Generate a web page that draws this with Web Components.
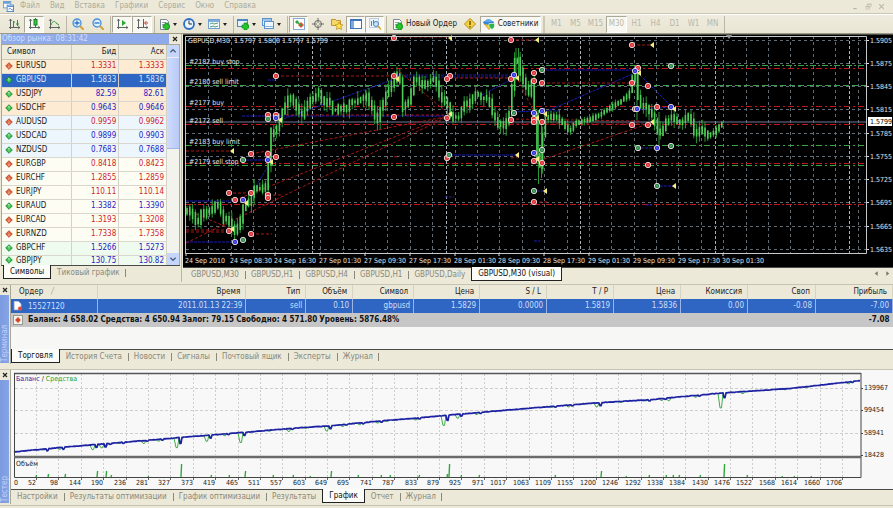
<!DOCTYPE html>
<html lang="ru">
<head>
<meta charset="utf-8">
<title>GBPUSD,M30 (visual)</title>
<style>
html{background:#ece9d8}
body{margin:0;font:8px/10px "DejaVu Sans Condensed","DejaVu Sans",sans-serif;color:#222;background:#ece9d8}
</style>
</head>
<body>
<trade-app></trade-app>
<script>
const RESET = `*{box-sizing:border-box}
button{font:inherit;color:inherit;background:none;border:0;padding:0;margin:0;white-space:nowrap;cursor:default}
svg{display:block}`;

function define(name, css, render) {
  customElements.define(name, class extends HTMLElement {
    connectedCallback() {
      if (this.shadowRoot) return;
      const root = this.attachShadow({ mode: 'open' });
      root.innerHTML = `<style>${RESET}${css}</style>` + render(this);
    }
  });
}

/* ---------- icons ---------- */
const page = '<path d="M2.5 1.5h6l2 2v8h-8z" fill="#fff" stroke="#7c8794"/><path d="M4 4.5h4M4 6.5h5" stroke="#9aa4b0"/>';
const plus = (x, y) => `<path d="M${x + 2} ${y}h3v2h2v3h-2v2h-3v-2h-2v-3h2z" fill="#25c52b" stroke="#118a1d" stroke-width=".7"/>`;
const axes = '<path d="M2.500 1v10M1 9.500h11" stroke="#5b6660" fill="none"/><path d="M1 3l1.500-2L4 3M10 8l2 1.500L10 11" fill="none" stroke="#5b6660" stroke-width=".7"/>';
const ICONS = {
  app: '<rect x=".5" y=".5" width="8" height="7" fill="#fff" stroke="#6f9bd3"/><path d="M1 2h7" stroke="#6f9bd3" stroke-width="2"/><rect x="4.500" y="4.500" width="7" height="7" fill="#fff" stroke="#4a86d0"/><path d="M5 6h7M6 9l2-1 2 2 2-2" stroke="#4a86d0" fill="none"/>',
  bars: axes + '<path d="M5.500 3v6M5 4h2M9.500 2v6M8 6h3" stroke="#28913a" fill="none"/>',
  candles: axes + '<path d="M7.500 0v9" stroke="#14841f"/><rect x="6" y="1.500" width="3" height="5.500" fill="#2fca3c" stroke="#14841f"/>',
  line: axes + '<path d="M3 7C5 2 7 3 8 5l3 2" stroke="#28a03a" fill="none"/>',
  zoomin: '<path d="M8 8l4 4" stroke="#d6a53a" stroke-width="2.200"/><circle cx="5" cy="5" r="4" fill="#dff0fd" stroke="#4b8fd6" stroke-width="1.300"/><path d="M2.500 5h5M5 2.500v5" stroke="#2c73c4" stroke-width="1.300"/>',
  zoomout: '<path d="M8 8l4 4" stroke="#d6a53a" stroke-width="2.200"/><circle cx="5" cy="5" r="4" fill="#dff0fd" stroke="#4b8fd6" stroke-width="1.300"/><path d="M2.500 5h5" stroke="#2c73c4" stroke-width="1.300"/>',
  scroll: axes + '<path d="M6 2l4 3-4 3z" fill="#27a738"/>',
  shift: axes + '<path d="M7.500 1v8" stroke="#566"/><path d="M12 5H9M10.500 3L8.500 5l2 2" stroke="#c0432c" fill="none"/>',
  newchart: page + plus(5, 5),
  clock: '<circle cx="6" cy="6" r="5" fill="#eaf5ff" stroke="#2d6fc4" stroke-width="1.800"/><path d="M6 2.500V6h3" stroke="#234" fill="none"/>',
  template: '<rect x=".5" y="1.500" width="11" height="9" fill="#f4faff" stroke="#6d9fd4"/><path d="M1 3h10" stroke="#5b93d0" stroke-width="1.500"/><path d="M2 6l2-1 2 1 4-1M2 9l3-1 2 1 3-1" fill="none" stroke="#5a9a78"/>',
  addwin: '<rect x=".5" y="1.500" width="10" height="7" fill="#e6f1fc" stroke="#4c88c9"/><path d="M1 2.500h9" stroke="#4c88c9"/>' + plus(5, 5),
  windows: '<rect x=".5" y=".5" width="9" height="7" fill="#e6f1fc" stroke="#5b93d0"/><path d="M1 2h8" stroke="#5b93d0"/><rect x="2.500" y="3.500" width="9" height="7" fill="#eef6fd" stroke="#5b93d0"/><path d="M3 8.500h8" stroke="#8db6e2"/>',
  watch: '<rect x=".5" y=".5" width="11" height="11" fill="#fff" stroke="#86a9d0"/><path d="M2 4l2-2 2 2-2 2z" fill="#2aa83a"/><path d="M5 7l3-3 3 3-3 3z" fill="#df5538"/><path d="M4 4l5 4" stroke="#2aa83a" stroke-width="1.500"/>',
  cross: '<circle cx="6" cy="6" r="3.500" fill="none" stroke="#6c6c66"/><path d="M6 0v5M6 7v5M0 6h5M7 6h5" stroke="#6c6c66"/>',
  folderstar: '<path d="M.5 1.500h4l1 1h4v5h-9z" fill="#f7d768" stroke="#bd9530"/><path d="M8 4l1.300 2.500 2.700.4-2 1.900.5 2.700L8 10.200 5.500 11.500 6 8.800 4 6.900l2.700-.4z" fill="#ffe24a" stroke="#b98a1c" stroke-width=".7"/>',
  panel: '<rect x=".5" y="1.500" width="11" height="9" fill="#fff" stroke="#3f74b8"/><path d="M1 2.500h10" stroke="#3f74b8"/><rect x="1" y="3" width="3" height="7" fill="#7ea9dc"/>',
  tester: '<rect x=".5" y=".5" width="9" height="9" fill="#eaf4fd" stroke="#86a9d0" stroke-dasharray="1 1"/><path d="M2.500 3v5M4.500 2v4" stroke="#4a84c2"/><circle cx="7" cy="6" r="2.500" fill="#cfe6fa" stroke="#4a84c2"/><path d="M9 8l3 3.500" stroke="#d6a53a" stroke-width="1.600"/>',
  warn: '<path d="M6 .5L11.500 6 6 11.500.5 6z" fill="#f8d23c" stroke="#b38a18"/><path d="M6 3v4M6 8v1.500" stroke="#54420c" stroke-width="1.300"/>',
  expert: '<path d="M1 6l5 5.500L11 6 6 4z" fill="#f1c63c" stroke="#bb8f1b" stroke-width=".6"/><ellipse cx="5.500" cy="4.500" rx="5.500" ry="2.200" fill="#3786d6"/><path d="M2 4C2 0 9 0 9 4z" fill="#5ba8ee"/><path d="M6 5.500h5.500V9L9 11.500 6 9z" fill="#2bb44a" stroke="#fff" stroke-width=".6"/>',
  order: '<path d="M1.500.5h5l3 3v7h-8z" fill="#fff" stroke="#c8d2de"/><circle cx="8.500" cy="9" r="2.500" fill="#e0492f"/>',
  balance: '<rect x=".5" y=".5" width="11" height="11" fill="#f3f3ee" stroke="#8b8b84"/><path d="M6 2.500L9.500 6 6 9.500 2.500 6z" fill="#d4472c"/>',
  up: '<path d="M6 1l5 5-5 5-5-5z" fill="#23b53c" stroke="#128028"/><path d="M6 3.500v5M4 5.500l2-2 2 2" stroke="#d8ffd8" fill="none"/>',
  down: '<path d="M6 1l5 5-5 5-5-5z" fill="#d9552f" stroke="#ab3c1e"/><path d="M6 3.500v5M4 6.500l2 2 2-2" stroke="#ffc8a8" fill="none"/>',
  close: '<path d="M3 3l6 6M9 3L3 9" stroke="#222" stroke-width="1.800"/>',
  min: '<path d="M2 9.500h6" stroke="#b9b7a8" stroke-width="2"/>',
  restore: '<path d="M4.500 1.500h6v5h-6zM4 2.500h7M1.500 5.500h6v5h-6zM1 6.500h7" fill="none" stroke="#b9b7a8"/>',
  winclose: '<path d="M2 2l8 8M10 2l-8 8" stroke="#b9b7a8" stroke-width="1.800"/>',
  chevup: '<path d="M2 8l4-4 4 4" fill="none" stroke="#4a6385" stroke-width="2"/>',
  chevdown: '<path d="M2 4l4 4 4-4" fill="none" stroke="#4a6385" stroke-width="2"/>',
  left: '<path d="M8 2L3 6l5 4z" fill="#77756a"/>',
  right: '<path d="M4 2l5 4-5 4z" fill="#77756a"/>'
};
define('mt-icon', ':host{display:inline-block;width:var(--s,12px);height:var(--s,12px);flex:none}svg{width:100%;height:100%}',
  el => `<svg viewBox="0 0 12 12" fill="none" aria-hidden="true">${ICONS[el.getAttribute('name')]}</svg>`);

/* ---------- menu bar ---------- */
define('menu-bar', `:host{display:flex;align-items:center;height:14px;padding:0 8px 1px 3px;color:#aeac9d;border-bottom:1px solid #c9c6b4}
nav{display:flex;gap:10px;margin-left:6px;flex:1}.w{display:flex;gap:6px}.w mt-icon{--s:7px}.w button{line-height:0}`,
  () => `<mt-icon name="app" style="--s:11px"></mt-icon><nav>${['Файл', 'Вид', 'Вставка', 'Графики', 'Сервис', 'Окно', 'Справка'].map(t => `<button>${t}</button>`).join('')}</nav>
<div class="w">${[['min', 'Свернуть'], ['restore', 'Восстановить'], ['winclose', 'Закрыть']].map(([i, l]) => `<button aria-label="${l}"><mt-icon name="${i}"></mt-icon></button>`).join('')}</div>`);

/* ---------- toolbar ---------- */
define('tool-button', `:host{display:block;flex:none;width:var(--w,20px)}
button{display:flex;align-items:center;justify-content:center;gap:3px;width:100%;height:17px;border:1px solid transparent}
:host([drop]) button{justify-content:flex-start;padding-left:1px}
:host([pressed]) button{background:#f8f7f1;border-color:#aaa899 #fff #fff #aaa899}
:host([frame]){color:#b9b7a8}
i{border:2px solid transparent;border-top:3px solid #222;border-bottom:0;flex:none}`,
  el => `<button${el.title ? ` aria-label="${el.title}"` : ''}>${el.getAttribute('icon') ? `<mt-icon name="${el.getAttribute('icon')}"></mt-icon>` : ''}<slot></slot>${el.hasAttribute('drop') ? '<i></i>' : ''}</button>`);
define('tool-bar', `:host{display:flex;align-items:center;height:20px;padding-left:4px;border-top:1px solid #fff;border-bottom:1px solid #9c9a8a;overflow:hidden;background:linear-gradient(#efecdf,#e8e5d3)}
hr{width:1px;height:17px;margin:0 1px 0 2px;border:0;background:#bab7a4;flex:none}hr.g{width:2px;margin:0 2px;background:#cbc8b6}
.n{--w:19px}.d{--w:25px}.t{--w:21px}.o{--w:72px}.e{--w:61px}`,
  () => `<tool-button icon="bars" title="Бары"></tool-button><tool-button icon="candles" title="Свечи" pressed></tool-button><tool-button icon="line" title="Линия"></tool-button><hr>
<tool-button icon="zoomin" title="Увеличить"></tool-button><tool-button icon="zoomout" title="Уменьшить"></tool-button><hr>
<tool-button icon="scroll" title="Автопрокрутка" pressed></tool-button><tool-button icon="shift" title="Сдвиг графика" pressed></tool-button><hr>
<tool-button class="d" icon="newchart" title="Индикаторы" drop></tool-button><tool-button class="d" icon="clock" title="Периоды" drop></tool-button><tool-button class="d" icon="template" title="Шаблоны" drop></tool-button><hr>
<tool-button class="d" icon="addwin" title="Новый график" drop></tool-button><tool-button class="d" icon="windows" title="Профили" drop></tool-button><hr>
<tool-button class="n" icon="watch" title="Обзор рынка" pressed></tool-button><tool-button class="n" icon="cross" title="Окно данных"></tool-button><tool-button class="n" icon="folderstar" title="Навигатор"></tool-button><tool-button class="n" icon="panel" title="Терминал" pressed></tool-button><tool-button class="n" icon="tester" title="Тестер" pressed></tool-button><hr>
<tool-button class="o" icon="newchart">Новый Ордер</tool-button><tool-button icon="warn" title="MetaEditor"></tool-button><tool-button class="e" icon="expert" pressed>Советники</tool-button><hr class="g">
${['M1', 'M5', 'M15', 'M30', 'H1', 'H4', 'D1', 'W1', 'MN'].map(t => `<tool-button frame class="${t.length > 2 ? 't' : 'n'}"${t === 'M30' ? ' pressed' : ''}>${t}</tool-button>`).join('')}<hr>`);

/* ---------- tab strip ---------- */
define('tab-strip', `:host{display:flex;flex:none;height:15px;border-top:1px solid #4a4a46;color:#8a887b;background:#ece9d8;padding-left:var(--pad,0)}
button{height:13px;padding:0 6px;position:relative}
button+button:not(.on):not(.after)::before,button.last::after{content:"";position:absolute;left:0;top:3px;height:8px;border-left:1px solid #8a887b}
button.last::after{left:auto;right:0}
button.on{background:#fcfcf8;color:#111;border:1px solid #222;border-top:0;margin-top:-1px;padding-top:1px;height:14px}
span{flex:1}.nav{padding:0 2px}.nav mt-icon{--s:7px}`,
  el => {
    const tabs = el.getAttribute('tabs').split(';'), on = +el.getAttribute('active');
    return tabs.map((t, i) => `<button role="tab" aria-selected="${i === on}" class="${i === on ? 'on' : ''} ${i === on + 1 ? 'after' : ''} ${i === tabs.length - 1 && i !== on ? 'last' : ''}">${t}</button>`).join('') +
      (el.hasAttribute('arrows') ? '<span></span><button class="nav after" aria-label="Назад"><mt-icon name="left"></mt-icon></button><button class="nav after" aria-label="Вперёд"><mt-icon name="right"></mt-icon></button>' : '');
  });

/* ---------- market watch ---------- */
const QUOTES = [['EURUSD', '1.3331', '1.3333', 0, 'a'], ['GBPUSD', '1.5833', '1.5836', 1, 'sel'], ['USDJPY', '82.59', '82.61', 1, 'a'], ['USDCHF', '0.9643', '0.9646', 1, 'a'], ['AUDUSD', '0.9959', '0.9962', 0, 'b'], ['USDCAD', '0.9899', '0.9903', 1, 'b'], ['NZDUSD', '0.7683', '0.7688', 1, 'b'], ['EURGBP', '0.8418', '0.8423', 0, 'c'], ['EURCHF', '1.2855', '1.2859', 0, 'c'], ['EURJPY', '110.11', '110.14', 0, 'c'], ['EURAUD', '1.3382', '1.3390', 1, 'c'], ['EURCAD', '1.3193', '1.3208', 0, 'c'], ['EURNZD', '1.7338', '1.7358', 0, 'c'], ['GBPCHF', '1.5266', '1.5273', 1, 'd'], ['GBPJPY', '130.75', '130.82', 1, 'd']];
define('market-watch', `:host{display:flex;flex-direction:column;padding:0 1px 2px;border-right:1px solid #bab7a6}
header{display:flex;height:10px;line-height:10px;background:#8eaaea;color:#d3dff9}header b{flex:1;font-weight:400;padding-left:1px}
header button{width:11px;background:#ece9d8;display:grid;place-items:center}header mt-icon{--s:8px}
.body{display:flex;flex:1 1 0;min-height:0;overflow:hidden;border:1px solid #aaa797;border-bottom:0;background:#fff}
.list{flex:1;overflow:hidden}
table{width:100%;border-collapse:collapse;table-layout:fixed}
th,td{height:14px;padding:0 2px 0 3px;font-weight:400;text-align:right;border-right:1px solid #d3d1c8;border-bottom:1px solid #d9d7ce}
th{background:#efecde;border-color:#cbc8b8}th:first-child,td:first-child{text-align:left}th:first-child{width:42%;padding-left:5px}
td mt-icon{--s:8px;vertical-align:middle;margin-right:3px}
tr:last-child td{vertical-align:top;line-height:9px}
.a{background:#fdebd3}.b{background:#edf6fd}.c{background:#fefdf3}.d{background:#effbef}.up td+td{color:#2722c4}.dn td+td{color:#d0232a}
tr.sel td{background:#2f66c4;color:#d9e5fb}
.sb{width:12px;background:#f3f3ee;display:flex;flex-direction:column}.sb button{height:12px;background:#c6d5fb;display:grid;place-items:center}.sb mt-icon{--s:8px}
.sb i{height:92px;background:linear-gradient(90deg,#cfdcfd,#b7caf6);border-top:1px solid #eef;border-bottom:1px solid #a2b6e4}.sb s{flex:1}`,
  () => `<header><b>Обзор рынка: 08:31:42</b><button aria-label="Закрыть"><mt-icon name="close"></mt-icon></button></header>
<div class="body"><div class="list"><table><thead><tr><th>Символ</th><th>Бид</th><th>Аск</th></tr></thead><tbody>
${QUOTES.map(([s, b, a, u, c]) => `<tr class="${c} ${u ? 'up' : 'dn'}"><td><mt-icon name="${u ? 'up' : 'down'}"></mt-icon>${s}</td><td>${b}</td><td>${a}</td></tr>`).join('')}
</tbody></table></div><div class="sb"><button aria-label="Вверх"><mt-icon name="chevup"></mt-icon></button><i></i><s></s><button aria-label="Вниз"><mt-icon name="chevdown"></mt-icon></button></div></div>
<tab-strip tabs="Символы;Тиковый график" active="0" style="--pad:2px"></tab-strip>`);

/* ---------- price chart ---------- */
function priceChart() {
  const o = [], ln = (x1, y1, x2, y2, c, d, w = 1) => o.push(`<line x1="${x1}" y1="${y1}" x2="${x2}" y2="${y2}" stroke="${c}"${d ? ` stroke-dasharray="${d}"` : ''} stroke-width="${w}"/>`);
  const L = 186, R = 866, grid = '#616c74';
  for (let i = 0; i < 30; i++) ln(Math.round(208.3 + i * 22.39) + .5, 36, Math.round(208.3 + i * 22.39) + .5, 253, grid, '3 3');
  for (const x of [312, 446, 580, 715, 849]) ln(x + .5, 36, x + .5, 253, '#a9b1b6', '3 2');
  const price = ['1.5905', '1.5875', '1.5845', '1.5815', '1.5785', '1.5755', '1.5725', '1.5695', '1.5665', '1.5635'];
  price.forEach((p, i) => { const y = Math.round(39.5 + i * 23.28); ln(L, y + .5, R, y + .5, grid, '3 3'); ln(R, y + .5, R + 3, y + .5, '#ddd'); o.push(`<text x="870" y="${y + 3}">${p}</text>`); });
  const G = '#38a343', D = '#c01818', B = '#1c1cae';
  for (const [y, c, d] of [[65, G, '6 2 2 2'], [68, D, '6 3 2 3'], [85, G, '6 3'], [106, D, '6 3 2 3'], [124, D, '6 3 2 3'], [145, G, '6 3 2 3'], [163, D, '6 3 2 3'], [165, G, '6 3 2 3'], [204, D, '6 2 2 2']]) ln(L, y + .5, R, y + .5, c, d);
  ln(L, 122, R, 122, '#6d7892');
  for (const s of [[186, 201, 234, 201], [186, 242, 235, 242], [242, 116, 445, 116], [246, 203, 270, 163], [280, 120, 392, 80], [397, 75, 514, 75], [397, 77, 514, 77], [450, 155, 517, 155], [478, 97, 514, 78], [542, 70, 637, 70], [545, 112, 637, 72], [545, 111, 560, 111], [640, 75, 671, 106], [635, 110, 671, 107], [637, 148, 657, 148], [656, 186, 674, 186], [242, 160, 268, 160], [533, 191, 545, 191], [514, 112, 534, 111], [445, 197, 454, 197], [534, 241, 540, 241], [268, 80, 276, 80], [276, 39, 281, 39], [646, 205, 652, 205]]) ln(...s, B, '3 1');
  for (const s of [[276, 76, 394, 76], [394, 37, 450, 37], [511, 40, 537, 40], [632, 45, 652, 45], [450, 78, 511, 78], [542, 83, 632, 83], [228, 193, 251, 193], [186, 151, 232, 151], [186, 230, 229, 230], [186, 232, 229, 232], [186, 210, 234, 230], [186, 243, 445, 118], [235, 200, 445, 117], [251, 154, 445, 117], [544, 159, 648, 124], [276, 115, 445, 115], [511, 119, 640, 121], [511, 124, 648, 124], [518, 80, 534, 112], [400, 72, 446, 112], [268, 195, 281, 195], [251, 234, 272, 234], [394, 157, 400, 156], [511, 158, 518, 157], [534, 202, 548, 202]]) ln(...s, '#a81616', '3 2');

  const P = [186, 209, 190, 211, 194, 216, 198, 226, 202, 214, 208, 213, 212, 211, 216, 205, 220, 206, 224, 220, 228, 218, 232, 226, 236, 232, 240, 226, 245, 206, 250, 203, 254, 190, 258, 189, 262, 188, 266, 192, 269, 175, 271, 130, 276, 133, 280, 122, 284, 110, 288, 100, 292, 99, 296, 105, 300, 112, 304, 115, 308, 105, 312, 100, 316, 98, 320, 92, 324, 103, 330, 102, 335, 112, 340, 107, 346, 110, 352, 102, 358, 102, 364, 98, 368, 97, 374, 110, 378, 122, 382, 108, 386, 98, 390, 88, 394, 84, 398, 75, 401, 80, 404, 108, 408, 105, 413, 90, 416, 78, 422, 86, 428, 83, 434, 79, 438, 85, 441, 99, 446, 101, 449, 107, 452, 118, 460, 117, 464, 104, 470, 104, 478, 93, 482, 98, 490, 100, 494, 115, 500, 125, 506, 125, 510, 118, 513, 90, 516, 62, 518, 56, 521, 70, 526, 85, 531, 95, 533, 82, 536, 120, 539, 165, 541, 168, 544, 135, 547, 118, 552, 115, 557, 117, 563, 122, 570, 132, 576, 123, 590, 120, 600, 115, 610, 108, 620, 102, 630, 95, 634, 78, 637, 76, 640, 104, 646, 107, 650, 110, 655, 118, 660, 137, 664, 128, 668, 120, 675, 118, 682, 124, 688, 115, 692, 120, 696, 134, 702, 128, 708, 136, 715, 133, 720, 126, 724, 122];
  const at = x => { let i = 2; while (i < P.length - 2 && P[i] < x) i += 2; const t = (x - P[i - 2]) / (P[i] - P[i - 2]); return P[i - 1] + (P[i + 1] - P[i - 1]) * Math.min(1, Math.max(0, t)); };
  /* A fixed seed keeps the candles the same on every load. */
  let seed = 7; const rnd = () => (seed = (seed * 16807) % 2147483647) / 2147483647;
  let wick = '', body = '';
  for (let x = 187; x <= 724; x += 2.8) {
    const calm = (x > 562 && x < 630) || x > 708 ? .35 : .9, a = at(x - 1.4), b = at(x + 1.4);
    const t = Math.min(a, b) - rnd() * 4 * calm - 1, u = Math.max(a, b) + rnd() * 4 * calm + 1;
    const up = rnd() * 8 * calm, dn = rnd() * 8 * calm;
    wick += `M${x.toFixed(1)} ${(t - up).toFixed(1)}V${(u + dn).toFixed(1)}`;
    body += `M${x.toFixed(1)} ${t.toFixed(1)}V${u.toFixed(1)}`;
  }
  wick += 'M516 48V80M518.500 48V75M538.500 110V184M541.500 120V178M637 68V120M659 112V147';
  o.push(`<path d="${wick}" stroke="#2a9a35" stroke-width="1"/><path d="${body}" stroke="#4fcb57" stroke-width="1.600"/>`);

  const dot = (pts, c) => pts.forEach(([x, y]) => o.push(`<circle cx="${x}" cy="${y}" r="2.700" fill="${c}" stroke="#f4e6e6" stroke-width=".9"/><path d="M${x - 1.5} ${y}h3M${x} ${y - 1.5}v3" stroke="#fff" stroke-opacity=".3" stroke-width=".8"/>`));
  dot([[276, 76], [394, 76], [394, 38], [268, 115], [276, 115], [394, 117], [229, 193], [235, 200], [251, 193], [251, 154], [268, 154], [276, 157], [268, 195], [268, 198], [229, 231], [251, 234], [511, 40], [450, 76], [447, 79], [511, 79], [534, 73], [534, 81], [542, 83], [511, 120], [542, 122], [534, 119], [534, 122], [447, 118], [447, 158], [534, 161], [542, 163], [534, 202], [632, 45], [638, 68], [632, 83], [635, 109], [632, 125], [648, 86], [648, 125], [648, 165], [657, 107]], '#dc2228');
  dot([[235, 242], [243, 200], [268, 160], [276, 118], [514, 75], [534, 113], [542, 111], [534, 153], [635, 71], [637, 109], [657, 148], [671, 107]], '#2326d8');
  dot([[243, 160], [268, 119], [243, 240], [514, 113], [542, 70], [449, 155], [542, 150], [534, 191], [638, 148], [671, 66], [671, 146], [657, 186]], '#1d7f3c');
  for (const [x, y] of [[232, 151], [246, 203], [232, 229], [271, 162], [280, 120], [397, 79], [450, 38], [537, 40], [450, 114], [517, 78], [537, 118], [545, 114], [517, 155], [537, 159], [545, 191], [652, 45], [639, 73], [652, 122], [674, 109], [674, 186]]) o.push(`<path d="M${x - 2} ${y}l4-3v6z" fill="#f6ee84"/>`);

  o.push('<path d="M185.500 253.500V36.500H866.500V253.500z" fill="none" stroke="#c4c8ca"/><path d="M726 35h6l-3 4z" fill="#8f9496"/>');
  ['24 Sep 2010', '24 Sep 08:30', '24 Sep 16:30', '27 Sep 01:30', '27 Sep 09:30', '27 Sep 17:30', '28 Sep 01:30', '28 Sep 09:30', '28 Sep 17:30', '29 Sep 01:30', '29 Sep 09:30', '29 Sep 17:30', '30 Sep 01:30'].forEach((t, i) => { const x = Math.round(184.8 + i * 44.8); o.push(`<text x="${x}" y="263">${t}</text>`); ln(x + 1, 253, x + 1, 256, '#ddd'); });
  o.push('<text x="188" y="43">GBPUSD,M30&#160; 1.5797 1.5800 1.5797 1.5799</text>');
  [['#2182 buy stop', 64], ['#2180 sell limit', 84], ['#2177 buy', 105], ['#2172 sell', 123], ['#2183 buy limit', 144], ['#2179 sell stop', 164]].forEach(([t, y]) => o.push(`<text x="189" y="${y}">${t}</text>`));
  o.push('<rect x="868" y="117" width="24" height="9" fill="#fff"/><text x="870" y="124" style="fill:#000">1.5799</text>');
  return o.join('');
}
define('price-chart', ':host{display:block;background:#000;border-top:1px solid #4a4d42;padding-bottom:1px}svg{width:100%;height:auto}text{fill:#e2e4e4;font-size:var(--chart-text)}',
  () => `<svg viewBox="183 35 710 231" role="img" aria-label="GBPUSD,M30">${priceChart()}</svg>`);

/* ---------- docked pane with a vertical caption ---------- */
define('dock-pane', `:host{display:grid;grid-template-columns:10px minmax(0,1fr);border-top:1px solid #c6c3b2}
aside{display:flex;flex-direction:column;padding-bottom:1px}aside button{height:10px;display:grid;place-items:center}aside mt-icon{--s:8px}
h2{flex:1;margin:0 1px 0 0;font:inherit;writing-mode:vertical-rl;transform:rotate(180deg);background:linear-gradient(90deg,#86a5e6,#7b9ae0);color:#c2d2f6;text-align:left;line-height:9px;padding-top:1px}
main{border-left:1px solid #aaa797}`,
  el => `<aside><button aria-label="Закрыть"><mt-icon name="close"></mt-icon></button><h2>${el.getAttribute('caption')}</h2></aside><main><slot></slot></main>`);

/* ---------- terminal ---------- */
const COLS = [['Ордер', '15527120', 87], ['Время', '2011.01.13 22:39', 148], ['Тип', 'sell', 60], ['Объём', '0.10', 47], ['Символ', 'gbpusd', 61], ['Цена', '1.5829', 66], ['S / L', '0.0000', 67], ['T / P', '1.5819', 67], ['Цена', '1.5836', 67], ['Комиссия', '0.00', 67], ['Своп', '-0.08', 68], ['Прибыль', '-7.00', 77]];
define('trade-table', `:host{display:block;background:#f7f7f6;padding-bottom:22px}
table{width:100%;border-collapse:collapse;table-layout:fixed}
th,td{height:14px;padding:0 3px;font-weight:400;text-align:right;white-space:nowrap}
th{background:#ece9d8;border-right:1px solid #d6d3c2;padding-right:5px}th:first-child,td:first-child{text-align:left}
th:first-child{padding-left:8px}th em{color:#aaa797;margin-left:8px}
td{background:#2f66c4;color:#cfdef8;border-right:1px solid #9bb6e6}
td mt-icon{--s:10px;vertical-align:middle;margin:0 5px 0 0}td:first-child{padding-left:2px}
tr.sum td{background:#c6c6c6;color:#111;font-weight:700;border:0}
.sum span{margin-right:2px}`,
  () => `<table><colgroup>${COLS.map(c => `<col style="width:${(c[2] / 8.82).toFixed(2)}%">`).join('')}</colgroup>
<thead><tr>${COLS.map((c, i) => `<th>${c[0]}${i ? '' : '<em>/</em>'}</th>`).join('')}</tr></thead>
<tbody><tr>${COLS.map((c, i) => `<td>${i ? '' : '<mt-icon name="order"></mt-icon>'}${c[1]}</td>`).join('')}</tr>
<tr class="sum"><td colspan="11"><mt-icon name="balance"></mt-icon><span>Баланс: 4 658.02</span><span>Средства: 4 650.94</span><span>Залог: 79.15</span><span>Свободно: 4 571.80</span><span>Уровень: 5876.48%</span></td><td>-7.08</td></tr></tbody></table>`);

/* ---------- tester graph ---------- */
function testerGraph() {
  const o = [], gx = i => Math.round(36 + i * 22.39) + .5;
  for (let i = 0; i < 37; i++) o.push(`<path d="M${gx(i)} 374V455M${gx(i)} 459V477" stroke="#cdcdcd" stroke-dasharray="2 2"/><path d="M${gx(i)} 477v3" stroke="#666"/>`);
  [['139967', 388], ['99454', 410], ['58941', 433], ['18428', 455]].forEach(([t, y], i) => { if (i < 3) o.push(`<path d="M15 ${y + .5}H860" stroke="#cdcdcd" stroke-dasharray="3 2"/>`); o.push(`<path d="M861 ${y + .5}h2" stroke="#444"/><text x="864" y="${y + 2}">${t}</text>`); });
  const K = [14, 452, 65, 447, 133, 441.5, 180, 437.5, 240, 432.7, 300, 427.7, 328, 426, 380, 421, 415, 418.3, 450, 415, 520, 409, 595, 403, 650, 399.7, 722, 393, 790, 388.5, 860, 380.7];
  const at = x => { let i = 2; while (i < K.length - 2 && K[i] < x) i += 2; return K[i - 1] + (K[i + 1] - K[i - 1]) * (x - K[i - 2]) / (K[i] - K[i - 2]); };
  const dips = [[46, 2, 1], [62, 2, 2], [95, 3, 5], [104, 3, 4], [109, 1, 2], [122, 1, 1], [146, 1, 3], [161, 1, 2], [179, 6, 10], [209, 3, 6], [227, 1, 2], [243, 3, 10], [272, 0, 1], [291, 1, 3], [308, 0, 1], [329, 3, 5], [345, 1, 2], [362, 1, 2], [380, 1, 2], [389, 0, 1], [418, 1, 2], [446, 5, 10], [460, 2, 4], [479, 1, 2], [554, 1, 1], [571, 1, 2], [599, 3, 4], [623, 0, 1], [648, 1, 1], [664, 1, 2], [671, 0, 3], [698, 1, 2], [723, 5, 15], [745, 0, 2], [787, 0, 1], [809, 0, 1], [851, 1, 2]];
  let line = `M14 ${at(14)}`, green = '', seed = 3;
  const rnd = () => (seed = (seed * 16807) % 2147483647) / 2147483647;
  for (let x = 15; x <= 860; x++) {
    const d = dips.find(d => x > d[0] && x < d[0] + 3), y = at(x) + (rnd() - .5) * .5;
    line += `L${x} ${(y + (d ? d[1] : 0)).toFixed(1)}`;
  }
  for (const [x, , h] of dips) green += `M${x - 5} ${at(x - 5).toFixed(1)}L${x - 3} ${(at(x) + h).toFixed(1)}h1.500L${x} ${at(x).toFixed(1)}`;
  o.push(`<path d="${green}" fill="none" stroke="#3ead47"/><path d="${line}" fill="none" stroke="#1d22a3" stroke-width="1.700" stroke-linejoin="round"/>`);
  let v = '';
  for (const [x, h] of [[36, 2], [48, 3], [65, 3], [97, 6], [106, 6], [111, 2], [148, 1], [181, 13], [211, 2], [229, 2], [245, 6], [273, 2], [293, 2], [310, 1], [331, 6], [358, 2], [381, 2], [390, 2], [419, 2], [447, 3], [449, 13], [461, 2], [479, 2], [555, 2], [601, 6], [626, 1], [649, 2], [666, 2], [673, 2], [679, 2], [700, 2], [724, 13], [747, 2], [782, 1], [794, 1], [811, 1]]) v += `M${x} 477l.6 -${h}`;
  o.push(`<path d="${v}" stroke="#2fa83a" stroke-width="1.400"/>`);
  o.push('<path d="M14 373.500H861" stroke="#555" stroke-width="1.500"/><path d="M14.500 373V477.500H861V373" fill="none" stroke="#444"/><path d="M14 457H861" stroke="#6a6a6a" stroke-width="2.500"/>');
  o.push('<text x="14" y="485">0</text>');
  [52, 98, 144, 190, 236, 281, 327, 373, 419, 465, 511, 557, 603, 649, 695, 741, 787, 833, 879, 925, 971, 1017, 1063, 1109, 1155, 1200, 1246, 1292, 1338, 1384, 1430, 1476, 1522, 1568, 1614, 1660, 1706].forEach((t, i) => o.push(`<text x="${Math.round(gx(i) - .5)}" y="485" text-anchor="end">${t}</text>`));
  o.push('<text x="16" y="381"><tspan fill="#1d22a3">Баланс</tspan> / <tspan fill="#1ea32a">Средства</tspan></text><text x="16" y="466">Объём</text>');
  return o.join('');
}
define('tester-graph', ':host{display:block;background:#f8f8f8}svg{width:100%;height:auto}text{fill:#222;font-size:var(--chart-text)}',
  () => `<svg viewBox="11 370 882 119" role="img" aria-label="График баланса">${testerGraph()}</svg>`);

/* ---------- shell ---------- */
define('trade-app', `:host{display:flex;flex-direction:column;--chart-text:7px}
.mid{display:grid;grid-template-columns:182px minmax(0,1fr);column-gap:1px;margin-bottom:2px}
.chart{display:flex;flex-direction:column}
dock-pane+dock-pane{margin-top:5px}
footer{height:2px;margin-top:1px;border-top:1px solid #c6c3b2}`,
  () => `<menu-bar></menu-bar><tool-bar></tool-bar>
<section class="mid"><market-watch></market-watch><div class="chart"><price-chart></price-chart><tab-strip arrows tabs="GBPUSD,M30;GBPUSD,H1;GBPUSD,H4;GBPUSD,H1;GBPUSD,Daily;GBPUSD,M30 (visual)" active="5" style="--pad:2px"></tab-strip></div></section>
<dock-pane caption="Терминал"><trade-table></trade-table><tab-strip tabs="Торговля;История Счета;Новости;Сигналы;Почтовый ящик;Эксперты;Журнал" active="0"></tab-strip></dock-pane>
<dock-pane caption="Тестер"><tester-graph></tester-graph><tab-strip tabs="Настройки;Результаты оптимизации;График оптимизации;Результаты;График;Отчет;Журнал" active="4"></tab-strip></dock-pane><footer></footer>`);
</script>
</body>
</html>
